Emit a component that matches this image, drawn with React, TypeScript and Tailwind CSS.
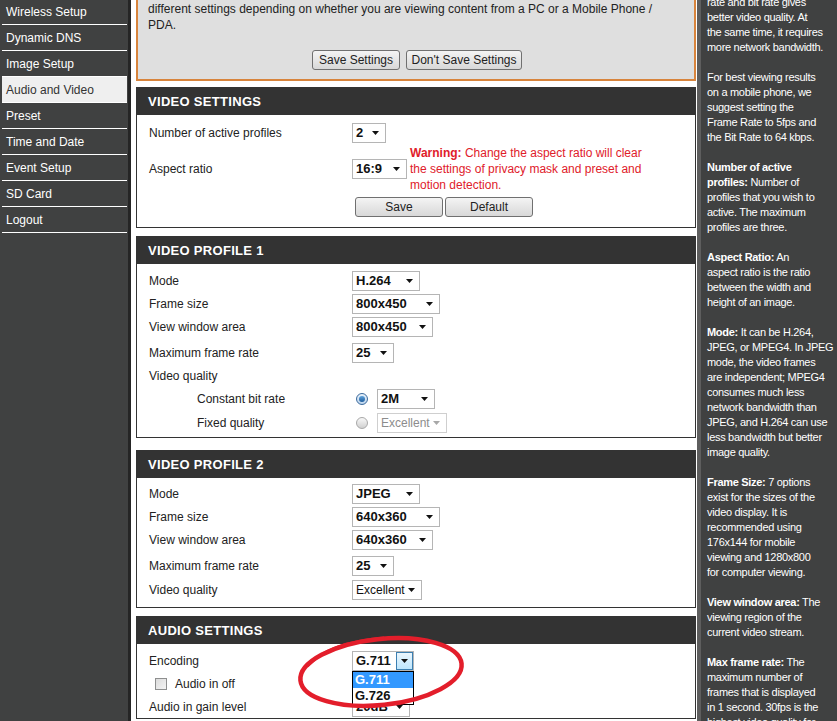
import React from 'react';

const menu = [
  'Wireless Setup',
  'Dynamic DNS',
  'Image Setup',
  'Audio and Video',
  'Preset',
  'Time and Date',
  'Event Setup',
  'SD Card',
  'Logout',
];

type Line = { b?: string; t?: string };

// help text, one entry per rendered line (blank entries are paragraph gaps)
const help: Line[] = [
  { t: 'rate and bit rate gives' },
  { t: 'better video quality. At' },
  { t: 'the same time, it requires' },
  { t: 'more network bandwidth.' },
  {},
  { t: 'For best viewing results' },
  { t: 'on a mobile phone, we' },
  { t: 'suggest setting the' },
  { t: 'Frame Rate to 5fps and' },
  { t: 'the Bit Rate to 64 kbps.' },
  {},
  { b: 'Number of active' },
  { b: 'profiles:', t: ' Number of' },
  { t: 'profiles that you wish to' },
  { t: 'active. The maximum' },
  { t: 'profiles are three.' },
  {},
  { b: 'Aspect Ratio:', t: ' An' },
  { t: 'aspect ratio is the ratio' },
  { t: 'between the width and' },
  { t: 'height of an image.' },
  {},
  { b: 'Mode:', t: ' It can be H.264,' },
  { t: 'JPEG, or MPEG4. In JPEG' },
  { t: 'mode, the video frames' },
  { t: 'are independent; MPEG4' },
  { t: 'consumes much less' },
  { t: 'network bandwidth than' },
  { t: 'JPEG, and H.264 can use' },
  { t: 'less bandwidth but better' },
  { t: 'image quality.' },
  {},
  { b: 'Frame Size:', t: ' 7 options' },
  { t: 'exist for the sizes of the' },
  { t: 'video display. It is' },
  { t: 'recommended using' },
  { t: '176x144 for mobile' },
  { t: 'viewing and 1280x800' },
  { t: 'for computer viewing.' },
  {},
  { b: 'View window area:', t: ' The' },
  { t: 'viewing region of the' },
  { t: 'current video stream.' },
  {},
  { b: 'Max frame rate:', t: ' The' },
  { t: 'maximum number of' },
  { t: 'frames that is displayed' },
  { t: 'in 1 second. 30fps is the' },
  { t: 'highest video quality for' },
];

const Arrow = ({ gray = false }: { gray?: boolean }) => (
  <svg width="7" height="4" viewBox="0 0 7 4" className="shrink-0">
    <path d="M0 0h7L3.5 4z" fill={gray ? '#a8a8a8' : '#111'} />
  </svg>
);

const Select = ({
  value,
  w,
  bold = true,
  disabled = false,
}: {
  value: string;
  w: string;
  bold?: boolean;
  disabled?: boolean;
}) => (
  <div
    className={`h-[20px] ${w} shrink-0 flex items-center justify-between pl-[3px] pr-[6px] bg-white border ${
      disabled ? 'border-[#cfcfcf] text-[#8c8c8c]' : 'border-[#b5b5b5] text-[#111]'
    } ${bold ? 'font-bold text-[13px]' : 'text-[12px]'}`}
  >
    <span>{value}</span>
    <Arrow gray={disabled} />
  </div>
);

const Button = ({ label, w }: { label: string; w: string }) => (
  <button
    className={`${w} h-[20px] whitespace-nowrap rounded-[3px] border border-[#707070] bg-gradient-to-b from-[#f4f4f4] to-[#d8d8d8] text-[12px] text-[#222] leading-none`}
  >
    {label}
  </button>
);

const Radio = ({ checked = false }: { checked?: boolean }) =>
  checked ? (
    <span className="block w-[12px] h-[12px] rounded-full border border-[#3b6a9c] bg-gradient-to-b from-[#e8f2fb] to-[#bcd4ec] flex items-center justify-center">
      <span className="block w-[6px] h-[6px] rounded-full bg-gradient-to-b from-[#5fa3dc] to-[#1c5c9c]" />
    </span>
  ) : (
    <span className="block w-[12px] h-[12px] rounded-full border border-[#a8a8a8] bg-gradient-to-b from-[#f8f8f8] to-[#d0d0d0]" />
  );

const Header = ({ title }: { title: string }) => (
  <div className="h-[27px] bg-[#333333] flex items-center pl-[11px] text-white font-bold text-[13px] tracking-[0.3px]">
    {title}
  </div>
);

const Row = ({
  label,
  children,
  cls = '',
  indent = false,
}: {
  label: string;
  children?: React.ReactNode;
  cls?: string;
  indent?: boolean;
}) => (
  <div className={`h-[23px] flex items-center ${cls}`}>
    <div className={`w-[203px] shrink-0 ${indent ? 'pl-[48px]' : ''}`}>{label}</div>
    <div className="flex items-center">{children}</div>
  </div>
);

export default function App() {
  return (
    <div className="w-[837px] h-[721px] overflow-hidden flex bg-white text-[12px] text-[#222] font-['Liberation_Sans',Arial,sans-serif]">
      {/* left menu */}
      <aside className="w-[131px] shrink-0 bg-[#404141] border-r-[3px] border-[#252525] pl-[2px] pr-[1px]">
        {menu.map((item, i) => (
          <div
            key={item}
            className={`${i === 0 ? 'h-[25px]' : 'h-[26px]'} flex items-center pl-[4px] border-b border-white ${
              item === 'Audio and Video' ? 'bg-[#efefef] text-[#333] border-[#efefef]' : 'text-white'
            }`}
          >
            {item}
          </div>
        ))}
      </aside>

      {/* settings column */}
      <main className="w-[566px] shrink-0 pl-[5px] pr-[1px]">
        <div className="bg-[#dfdfdf] border-x-2 border-b-2 border-[#d8843c] pl-[10px] pb-[9px]">
          <p className="leading-[16px] pt-[1px]">
            different settings depending on whether you are viewing content from a PC or a Mobile Phone /
            <br />
            PDA.
          </p>
          <div className="flex gap-[6px] mt-[17px] pl-[164px]">
            <Button label="Save Settings" w="w-[88px]" />
            <Button label="Don't Save Settings" w="w-[116px]" />
          </div>
        </div>

        {/* video settings */}
        <section className="mt-[6px] border border-[#333]">
          <Header title="VIDEO SETTINGS" />
          <div className="pl-[12px] pt-[6px] pb-[10px]">
            <Row label="Number of active profiles" cls="h-[21px]">
              <Select value="2" w="w-[34px]" />
            </Row>
            <div className="flex items-center mt-[1px]">
              <div className="w-[203px] shrink-0">Aspect ratio</div>
              <Select value="16:9" w="w-[55px]" />
              <p className="ml-[3px] w-[250px] leading-[16px] text-[#e0202a]">
                <b>Warning:</b> Change the aspect ratio will clear the settings of privacy mask and preset and
                motion detection.
              </p>
            </div>
            <div className="flex gap-[2px] mt-[4px] pl-[206px]">
              <Button label="Save" w="w-[88px]" />
              <Button label="Default" w="w-[88px]" />
            </div>
          </div>
        </section>

        {/* profile 1 */}
        <section className="mt-[8px] border border-[#333]">
          <Header title="VIDEO PROFILE 1" />
          <div className="pl-[12px] pt-[5px] pb-[3px]">
            <Row label="Mode">
              <Select value="H.264" w="w-[68px]" />
            </Row>
            <Row label="Frame size">
              <Select value="800x450" w="w-[88px]" />
            </Row>
            <Row label="View window area">
              <Select value="800x450" w="w-[81px]" />
            </Row>
            <Row label="Maximum frame rate" cls="mt-[3px]">
              <Select value="25" w="w-[42px]" />
            </Row>
            <Row label="Video quality" cls="h-[22px]" />
            <Row label="Constant bit rate" indent>
              <span className="ml-[4px] mr-[9px]">
                <Radio checked />
              </span>
              <Select value="2M" w="w-[58px]" />
            </Row>
            <Row label="Fixed quality" indent cls="mt-[1px]">
              <span className="ml-[4px] mr-[9px]">
                <Radio />
              </span>
              <Select value="Excellent" w="w-[70px]" bold={false} disabled />
            </Row>
          </div>
        </section>

        {/* profile 2 */}
        <section className="mt-[12px] border border-[#333]">
          <Header title="VIDEO PROFILE 2" />
          <div className="pl-[12px] pt-[4px] pb-[6px]">
            <Row label="Mode">
              <Select value="JPEG" w="w-[68px]" />
            </Row>
            <Row label="Frame size">
              <Select value="640x360" w="w-[88px]" />
            </Row>
            <Row label="View window area">
              <Select value="640x360" w="w-[81px]" />
            </Row>
            <Row label="Maximum frame rate" cls="mt-[3px]">
              <Select value="25" w="w-[42px]" />
            </Row>
            <Row label="Video quality" cls="mt-[1px]">
              <Select value="Excellent" w="w-[70px]" bold={false} />
            </Row>
          </div>
        </section>

        {/* audio */}
        <section className="relative mt-[8px] border border-[#333]">
          <Header title="AUDIO SETTINGS" />
          <div className="pl-[12px] pt-[5px]">
            <Row label="Encoding">
              <div className="relative">
                <div className="h-[20px] w-[62px] flex items-center bg-white border border-[#b5b5b5] font-bold text-[13px] text-[#111]">
                  <span className="pl-[3px] flex-1">G.711</span>
                  <span className="w-[17px] h-[18px] border border-[#3c7fb1] bg-gradient-to-b from-[#eaf6fd] to-[#bee6fd] flex items-center justify-center">
                    <Arrow />
                  </span>
                </div>
                <ul className="absolute z-10 left-0 top-[20px] w-[62px] bg-white border border-black font-bold text-[13px] leading-[16px]">
                  <li className="bg-[#3399ff] text-white pl-[2px]">G.711</li>
                  <li className="text-[#111] pl-[2px]">G.726</li>
                </ul>
              </div>
            </Row>
            <div className="h-[23px] flex items-center pl-[6px] gap-[8px]">
              <span className="block w-[12px] h-[12px] border border-[#8e8f8f] bg-gradient-to-br from-[#dcdcdc] to-[#f4f4f4]" />
              <span>Audio in off</span>
            </div>
            <Row label="Audio in gain level">
              <Select value="20dB" w="w-[58px]" />
            </Row>
          </div>
          {/* red marker ring, drawn slightly tilted */}
          <svg
            className="absolute z-20 left-[150px] top-[11px] pointer-events-none"
            width="190"
            height="92"
            viewBox="0 0 190 92"
          >
            <g transform="rotate(-6 94 44)">
              <ellipse cx="94" cy="44" rx="81" ry="33" fill="none" stroke="#e31e2b" strokeWidth="4.5" />
              <path
                d="M22 30C40 14 70 10 100 10.5"
                fill="none"
                stroke="#e31e2b"
                strokeWidth="3"
                strokeLinecap="round"
              />
            </g>
          </svg>
        </section>
      </main>

      {/* help column */}
      <aside className="flex-1 min-w-0 bg-[#404141] border-l-[4px] border-[#5e5e5e] pl-[6px] text-white text-[11px] tracking-[-0.3px] leading-[15px] whitespace-nowrap overflow-hidden">
        <div className="-mt-[5px]">
          {help.map((l, i) => (
            <div key={i} className="h-[15px]">
              {l.b && <b>{l.b}</b>}
              {l.t}
            </div>
          ))}
        </div>
      </aside>
    </div>
  );
}
